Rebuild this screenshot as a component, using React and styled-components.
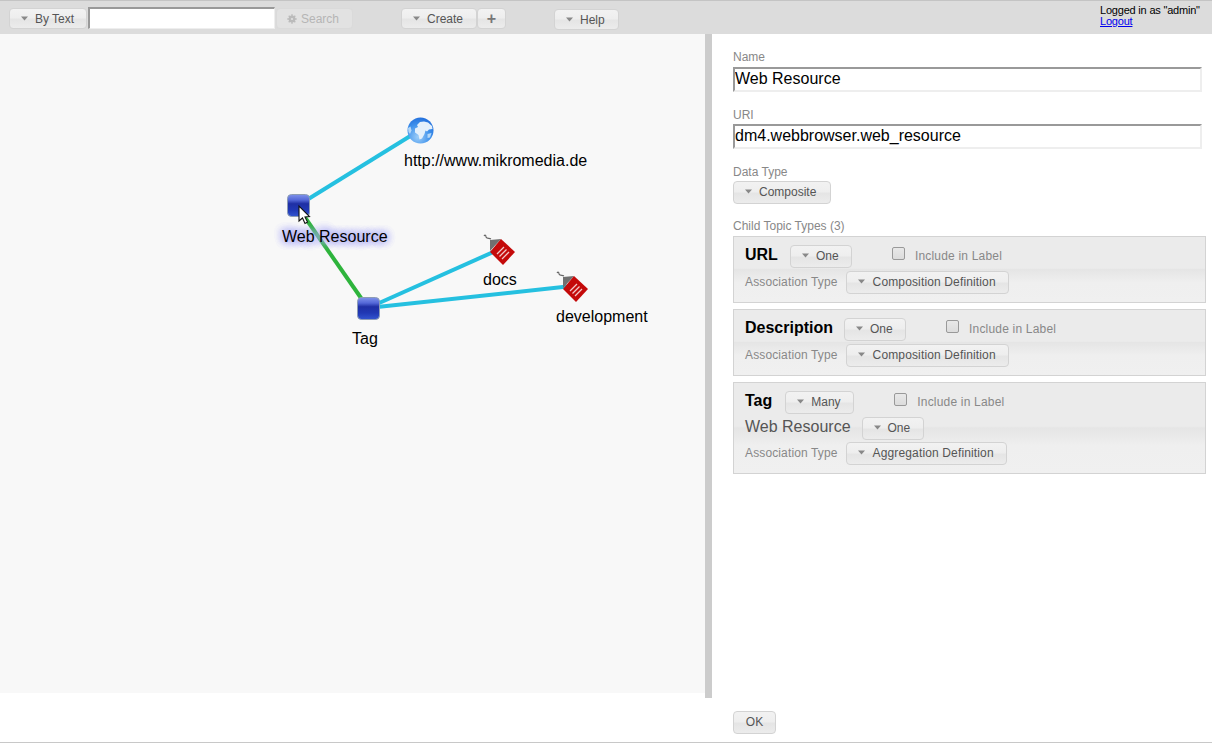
import React from "react";
import styled, { createGlobalStyle } from "styled-components";

const GlobalStyle = createGlobalStyle`
  html, body {
    margin: 0;
    padding: 0;
    background: #fff;
  }
  body {
    font-family: "Liberation Sans", Arial, sans-serif;
    overflow: hidden;
  }
`;

function Arrow() {
  return (
    <svg width="9" height="5" viewBox="0 0 9 5">
      <path d="M1 0.5 L8 0.5 L4.5 4.5 Z" fill="#888" />
    </svg>
  );
}

function Gear() {
  return (
    <svg width="10" height="10" viewBox="0 0 10 10">
      <circle cx="5" cy="5" r="3.4" fill="#bbb" />
      <path d="M5 0.300V9.700M0.300 5H9.700M1.700 1.700L8.300 8.300M8.300 1.700L1.700 8.300" stroke="#bbb" strokeWidth="1.400" />
      <circle cx="5" cy="5" r="1.100" fill="#e2e2e2" />
    </svg>
  );
}

function Menu({ label, width, height, wide }) {
  return (
    <Button $width={width} $height={height} $wide={wide}>
      <Arrow />
      <span>{label}</span>
    </Button>
  );
}

function Globe() {
  return (
    <svg x="407" y="83" width="27" height="27" viewBox="0 0 27 27">
      <defs>
        <radialGradient id="sea" cx="40%" cy="75%" r="85%">
          <stop offset="0" stopColor="#9ccdf8" />
          <stop offset="0.55" stopColor="#3f92ec" />
          <stop offset="1" stopColor="#1c66d8" />
        </radialGradient>
      </defs>
      <circle cx="13.500" cy="13.500" r="13" fill="url(#sea)" />
      <path
        d="M10 8 L13 5 L17 4.500 L21 5.500 L25 9 L25.500 12 L22 12.500 L20 14.500 L18.500 13.500 L17.500 17 L15 21.500 L12.500 22.500 L11.500 18 L8 15.500 L8 11.500 L11 10 Z"
        fill="#e4f0fb"
      />
      <path d="M1 11 L3.500 9.500 L4.500 13.500 L3 17 L1.500 15 Z" fill="#b5d8f7" />
      <path d="M20.500 17 L24.500 16 L23 20.500 L20.500 21 Z" fill="#b5d8f7" />
    </svg>
  );
}

function TopicTypeIcon({ x, y, id }) {
  return (
    <svg x={x} y={y} width="23" height="23" viewBox="0 0 23 23">
      <defs>
        <linearGradient id={id} x1="0" y1="0" x2="0" y2="1">
          <stop offset="0" stopColor="#7f92ea" />
          <stop offset="0.25" stopColor="#5468d8" />
          <stop offset="0.42" stopColor="#1f2fa4" />
          <stop offset="0.7" stopColor="#2038b4" />
          <stop offset="1" stopColor="#3355d0" />
        </linearGradient>
      </defs>
      <rect x="0.500" y="0.500" width="22" height="22" rx="4" fill={`url(#${id})`} stroke="#8d9cb4" />
    </svg>
  );
}

function TagIcon({ x, y }) {
  return (
    <svg x={x} y={y} width="34" height="33" viewBox="0 0 34 33">
      <path d="M1 2 C2 0.500 3 1 3 3 C4 5 6 4 8 5" fill="none" stroke="#666" strokeWidth="1.200" />
      <path d="M7 6 L18 5 L7 17 Z" fill="#707070" />
      <path d="M18 5 L32 18 L20 31 L7 18 Z" fill="#c40a0a" />
      <path d="M14 20 L21 13 M16.500 22.500 L23.500 15.500 M19 25 L26 18" stroke="#f2caca" strokeWidth="1.300" />
    </svg>
  );
}

function Graph() {
  return (
    <GraphSvg>
      <line x1="297" y1="172" x2="420" y2="96" stroke="#25c0e0" strokeWidth="4" />
      <line x1="368" y1="274" x2="500" y2="215" stroke="#25c0e0" strokeWidth="4" />
      <line x1="368" y1="274" x2="572" y2="252" stroke="#25c0e0" strokeWidth="4" />
      <line x1="297" y1="172" x2="368" y2="274" stroke="#2eb43c" strokeWidth="4" />
      <Globe />
      <TopicTypeIcon x={287} y={160} id="typeA" />
      <TopicTypeIcon x={357} y={263} id="typeB" />
      <TagIcon x={483} y={200} />
      <TagIcon x={556} y={237} />
      <path
        d="M299 172 L299 187 L302.500 184 L305 189.500 L307.500 188 L305 183 L309.500 182.500 Z"
        fill="#fff"
        stroke="#111"
        strokeWidth="1.100"
      />
    </GraphSvg>
  );
}

function ChildType({ name, nudge, card, extra, assoc, assocWidth, cardWidth }) {
  return (
    <ChildBox>
      <ChildHead>
        <ChildName $nudge={nudge}>{name}</ChildName>
        <Menu label={card} width={cardWidth} height={23} />
        <LabelToggle>
          <CheckBox />
          <span>Include in Label</span>
        </LabelToggle>
      </ChildHead>
      {extra && (
        <ExtraRow>
          <ExtraName>{extra}</ExtraName>
          <Menu label="One" width={62} height={23} />
        </ExtraRow>
      )}
      <AssocRow>
        <AssocLabel>Association Type</AssocLabel>
        <Menu label={assoc} width={assocWidth} height={23} wide />
      </AssocRow>
    </ChildBox>
  );
}

export default function App() {
  return (
    <Page>
      <GlobalStyle />
      <Toolbar>
        <Menu label="By Text" width={78} height={21} />
        <SearchInput />
        <SearchButton $width={77} $height={21}>
          <Gear />
          <span>Search</span>
        </SearchButton>
        <CreateGroup>
          <Menu label="Create" width={76} height={21} />
          <PlusButton $width={29} $height={21}>+</PlusButton>
        </CreateGroup>
        <HelpGroup>
          <Menu label="Help" width={65} height={21} />
        </HelpGroup>
        <LoginInfo>
          <div>Logged in as "admin"</div>
          <a href="#logout">Logout</a>
        </LoginInfo>
      </Toolbar>
      <Split>
        <CanvasColumn>
          <Canvas>
            <Graph />
            <NodeLabel $x={404} $y={117}>http://www.mikromedia.de</NodeLabel>
            <NodeLabel $x={282} $y={193} $glow>Web Resource</NodeLabel>
            <NodeLabel $x={483} $y={236}>docs</NodeLabel>
            <NodeLabel $x={556} $y={273}>development</NodeLabel>
            <NodeLabel $x={352} $y={295}>Tag</NodeLabel>
          </Canvas>
        </CanvasColumn>
        <Splitter />
        <Detail>
          <Form>
            <FieldLabel $top={16} $bottom={3}>Name</FieldLabel>
            <TextField readOnly value="Web Resource" />
            <FieldLabel $top={16}>URI</FieldLabel>
            <TextField readOnly value="dm4.webbrowser.web_resource" />
            <FieldLabel $top={16}>Data Type</FieldLabel>
            <Menu label="Composite" width={98} height={23} />
            <FieldLabel $top={15} $bottom={3}>Child Topic Types (3)</FieldLabel>
            <ChildList>
              <ChildType name="URL" nudge={1} card="One" cardWidth={62} assoc="Composition Definition" assocWidth={163} />
              <ChildType name="Description" card="One" cardWidth={62} assoc="Composition Definition" assocWidth={163} />
              <ChildType name="Tag" nudge={2} card="Many" cardWidth={69} extra="Web Resource" assoc="Aggregation Definition" assocWidth={161} />
            </ChildList>
          </Form>
          <Footer>
            <OkButton $width={43} $height={23}>OK</OkButton>
          </Footer>
        </Detail>
      </Split>
    </Page>
  );
}

const Page = styled.div`
  width: 1212px;
  height: 743px;
  display: flex;
  flex-direction: column;
  overflow: hidden;
  border-bottom: 1px solid #c8c8c8;
  box-sizing: border-box;
`;

const Toolbar = styled.div`
  height: 34px;
  flex: none;
  box-sizing: border-box;
  display: flex;
  align-items: flex-start;
  padding: 7px 0 0 9px;
  background: #dcdcdc;
  border-top: 1px solid #c4c4c4;
  position: relative;
`;

const Button = styled.button`
  width: ${(p) => p.$width}px;
  height: ${(p) => p.$height}px;
  box-sizing: border-box;
  padding: 0 0 ${(p) => (p.$height > 21 ? 2 : 0)}px 10px;
  display: inline-flex;
  flex: none;
  align-items: center;
  gap: ${(p) => (p.$wide ? 7 : 6)}px;
  font-family: "Liberation Sans", Arial, sans-serif;
  font-size: 12px;
  letter-spacing: ${(p) => (p.$wide ? "0.14px" : "0")};
  color: #555;
  border: 1px solid #d3d3d3;
  border-radius: 4px;
  background: linear-gradient(#f2f2f2 0%, #eeeeee 45%, #e5e5e5 55%, #ececec 100%);
`;

const SearchInput = styled.input`
  width: 187px;
  height: 22px;
  box-sizing: border-box;
  margin: -1px 0 0 1px;
  padding: 0;
  background: #fff;
  border-style: solid;
  border-width: 2px 1px 1px 2px;
  border-color: #999 #eee #eee #999;
`;

const SearchButton = styled(Button)`
  margin-left: 1px;
  gap: 4px;
  color: #b5b5b5;
  background: #e2e2e2;
  border-color: #dadada;
`;

const CreateGroup = styled.div`
  display: flex;
  margin-left: 48px;
`;

const PlusButton = styled(Button)`
  padding: 0;
  justify-content: center;
  font-size: 16px;
  font-weight: bold;
  color: #777;
`;

const HelpGroup = styled.div`
  margin-left: 48px;
`;

const LoginInfo = styled.div`
  position: absolute;
  left: 1100px;
  top: 4px;
  font-size: 11px;
  line-height: 11px;
  letter-spacing: -0.2px;
  color: #000;
  a {
    color: #0000ee;
    text-decoration: underline;
  }
`;

const Split = styled.div`
  flex: 1;
  display: flex;
  min-height: 0;
`;

const CanvasColumn = styled.div`
  width: 705px;
  flex: none;
`;

const Canvas = styled.div`
  height: 659px;
  background: #f8f8f8;
  position: relative;
  overflow: hidden;
`;

const GraphSvg = styled.svg`
  position: absolute;
  left: 0;
  top: 0;
  width: 705px;
  height: 659px;
`;

const NodeLabel = styled.div`
  position: absolute;
  left: ${(p) => p.$x}px;
  top: ${(p) => p.$y}px;
  font-size: 16px;
  line-height: 19px;
  white-space: nowrap;
  color: #000;
  text-shadow: ${(p) => (p.$glow ? "0 0 9px #a4a4f6, 0 0 9px #a4a4f6, 0 0 10px #b4b4fa, 0 0 10px #b4b4fa" : "none")};
`;

const Splitter = styled.div`
  width: 7px;
  height: 664px;
  flex: none;
  background: #cccccc;
`;

const Detail = styled.div`
  flex: 1;
  display: flex;
  flex-direction: column;
  padding-left: 21px;
  min-width: 0;
`;

const Form = styled.div`
  flex: 1;
  display: flex;
  flex-direction: column;
  align-items: flex-start;
`;

const FieldLabel = styled.div`
  margin: ${(p) => p.$top}px 0 ${(p) => p.$bottom || 2}px;
  font-size: 12px;
  line-height: 14px;
  color: #888;
`;

const TextField = styled.input`
  width: 469px;
  height: 25px;
  box-sizing: border-box;
  padding: 0 0 2px;
  font-family: "Liberation Sans", Arial, sans-serif;
  font-size: 16px;
  color: #000;
  background: #fff;
  outline: none;
  border-style: solid;
  border-width: 2px;
  border-color: #999 #eee #eee #999;
`;

const ChildList = styled.div`
  display: flex;
  flex-direction: column;
  gap: 6px;
`;

const ChildBox = styled.div`
  width: 473px;
  box-sizing: border-box;
  padding: 8px 11px;
  border: 1px solid #d3d3d3;
  background: linear-gradient(
    to bottom,
    #ebebeb 0,
    #ebebeb 48%,
    #e5e5e5 50%,
    #efefef 70%,
    #f0f0f0 100%
  );
`;

const ChildHead = styled.div`
  display: flex;
  align-items: center;
  height: 23px;
  gap: 11px;
`;

const ChildName = styled.div`
  font-size: 16px;
  font-weight: bold;
  color: #000;
  margin-top: -4px;
  margin-right: ${(p) => p.$nudge || 0}px;
`;

const LabelToggle = styled.div`
  display: flex;
  align-items: center;
  margin: -2px 0 0 29px;
  gap: 10px;
  font-size: 12px;
  letter-spacing: 0.19px;
  color: #888;
`;

const CheckBox = styled.span`
  width: 11px;
  height: 11px;
  margin-top: -5px;
  border: 1px solid #999;
  border-radius: 2px;
  background: linear-gradient(#e8e8e8, #dcdcdc);
`;

const ExtraRow = styled.div`
  display: flex;
  align-items: center;
  gap: 11px;
  height: 23px;
  margin: 3px 0 -1px;
`;

const ExtraName = styled.div`
  font-size: 16px;
  color: #555;
  margin-top: -3px;
`;

const AssocRow = styled.div`
  display: flex;
  align-items: center;
  gap: 8px;
  margin-top: 3px;
`;

const AssocLabel = styled.div`
  font-size: 12px;
  letter-spacing: 0.13px;
  color: #888;
  margin-top: -2px;
`;

const Footer = styled.div`
  height: 31px;
  flex: none;
`;

const OkButton = styled(Button)`
  padding: 0 0 2px;
  justify-content: center;
`;
